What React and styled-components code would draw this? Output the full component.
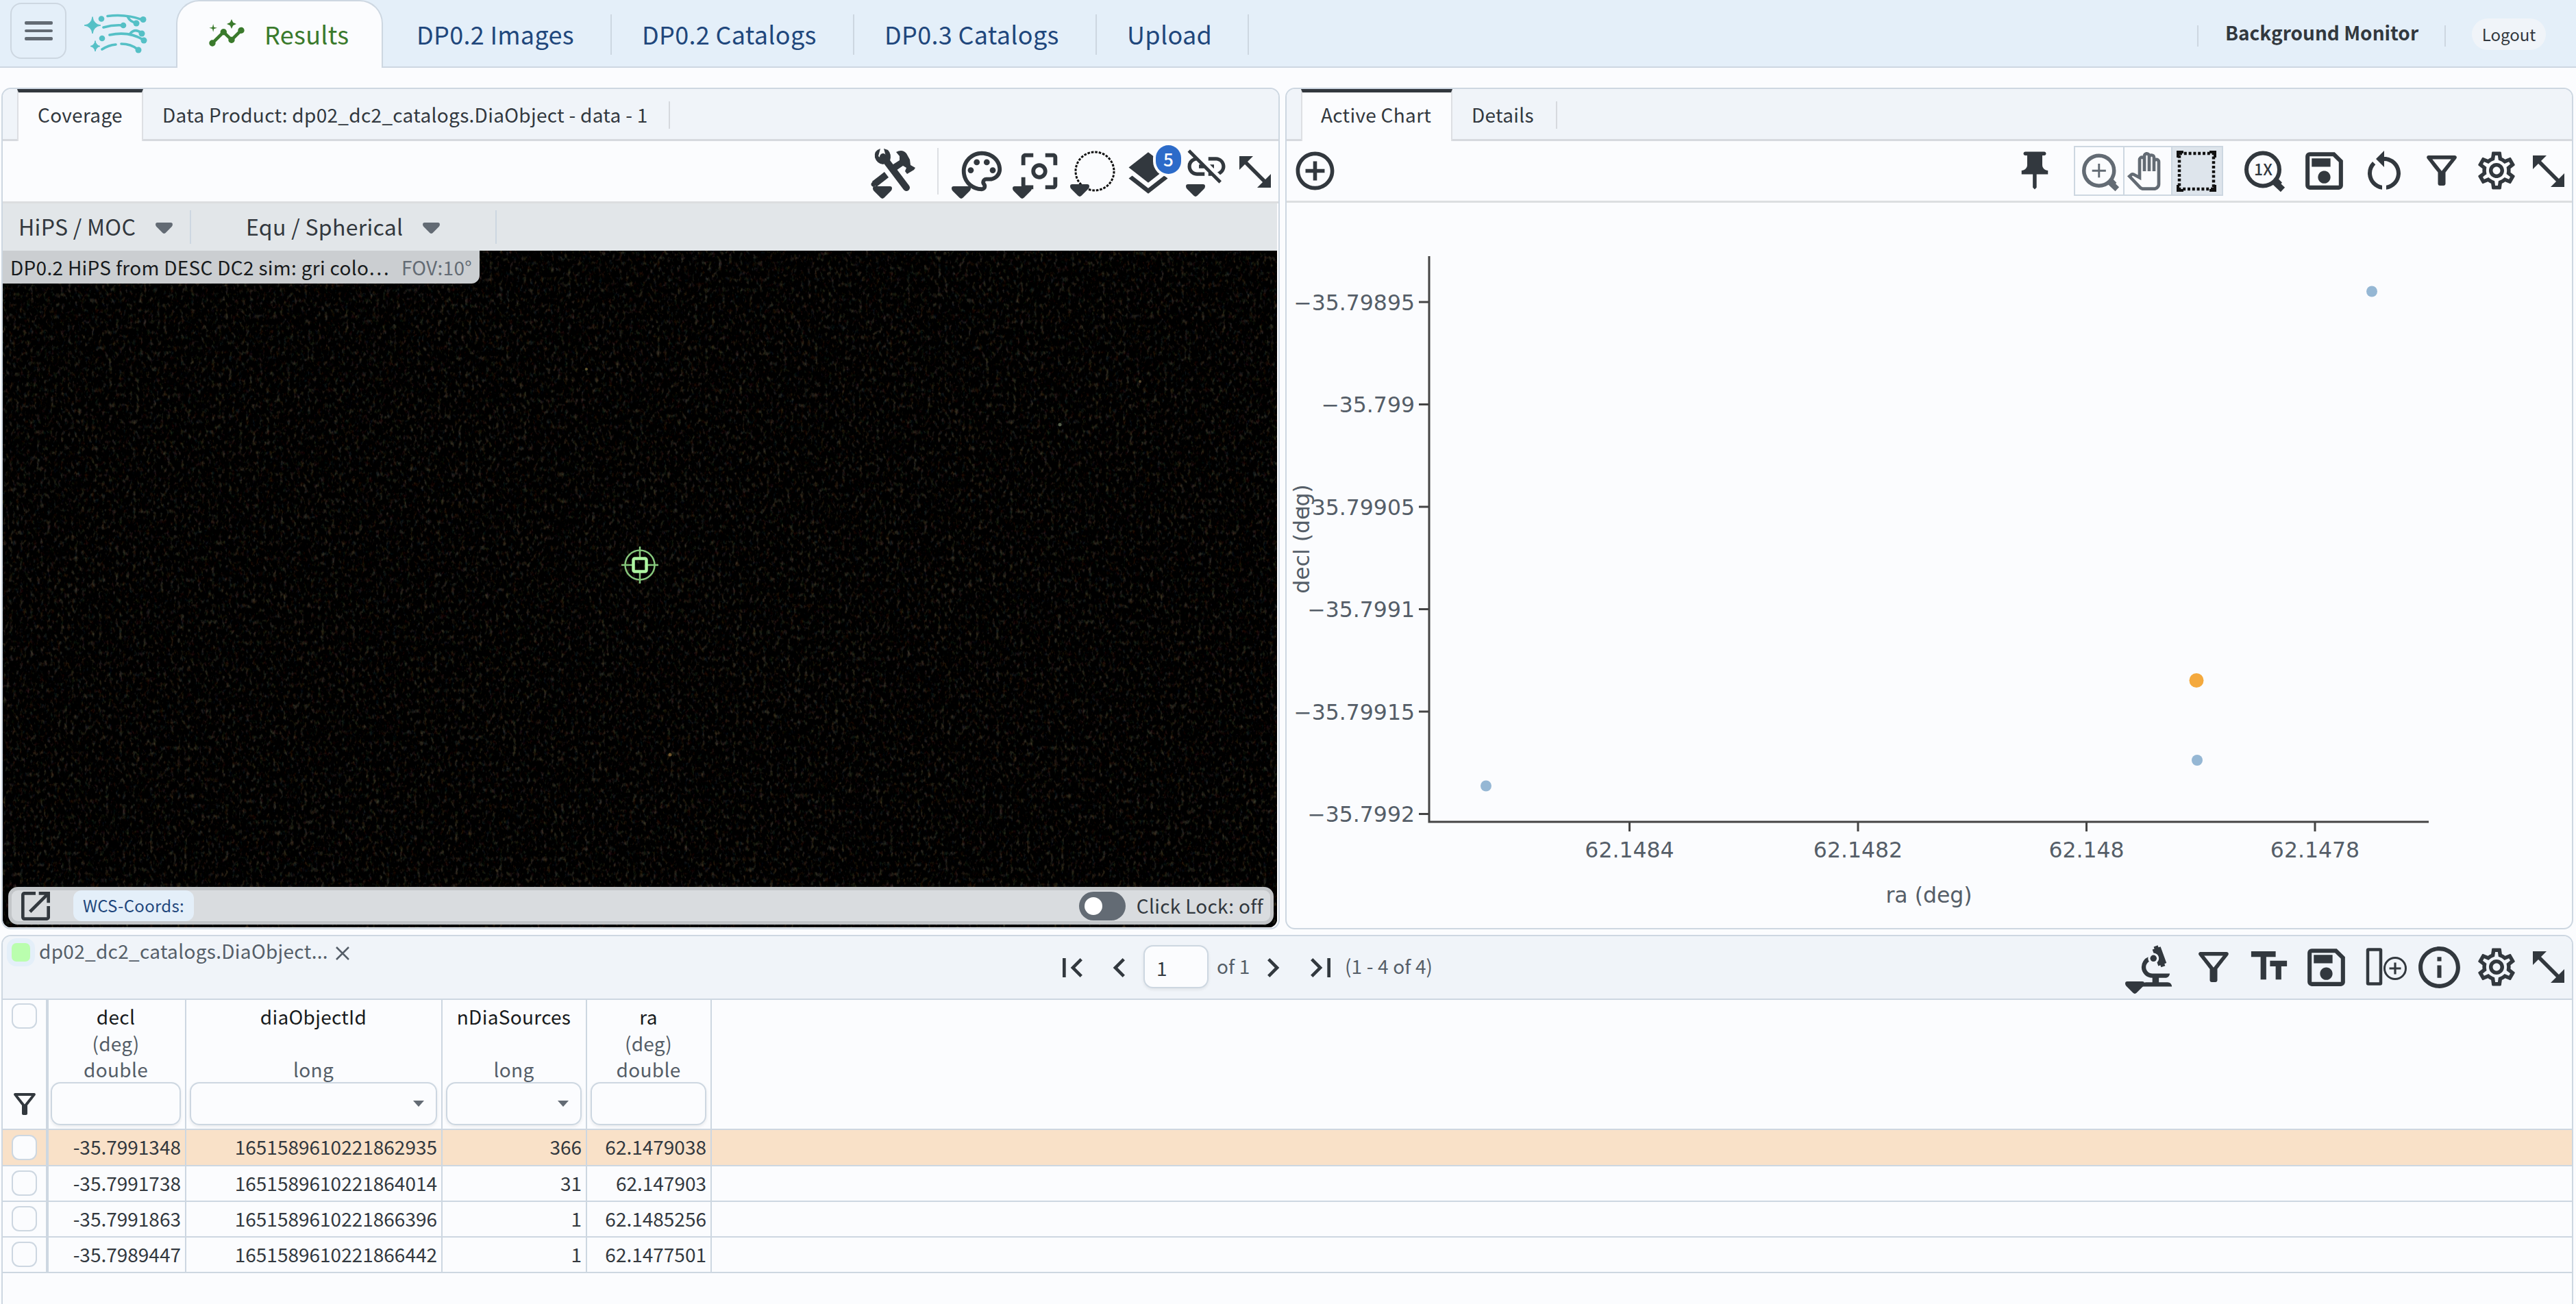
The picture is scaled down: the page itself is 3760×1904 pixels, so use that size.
import React from 'react';
import styled, { createGlobalStyle, css } from 'styled-components';
import {
  MdInsights, MdOutlinePalette, MdCenterFocusWeak, MdLayers, MdLinkOff,
  MdAddCircleOutline, MdPushPin, MdOutlineSave, MdRestartAlt, MdOutlineSettings,
  MdOutlineFilterAlt, MdOutlineTextFields, MdInfoOutline, MdBiotech,
  MdOutlinePanTool, MdOpenInNew, MdFirstPage, MdChevronLeft, MdChevronRight, MdLastPage,
} from 'react-icons/md';

const c = {
  page: '#fbfcfe', header: '#e4eff9', line: '#cdd7e1', panel: '#f0f4f9',
  ink: '#32383e', soft: '#555e68', mute: '#636b74', navy: '#1f477c', green: '#3a7a2c',
};

const Global = createGlobalStyle`
  *, *::before, *::after { box-sizing: border-box; }
  body { margin: 0; background: ${c.page}; overflow: hidden; }
`;

const Page = styled.div`
  display: flex;
  flex-direction: column;
  width: 3760px;
  height: 1904px;
  overflow: hidden;
  background: ${c.page};
  color: ${c.ink};
  font-family: "Noto Sans CJK SC", "Noto Sans", sans-serif;
  font-size: 28px;
  line-height: 40px;
  letter-spacing: 0.3px;
  white-space: nowrap;
`;

/* ---------- header ---------- */
const Header = styled.header`
  display: flex;
  flex: none;
  height: 99px;
  background: ${c.header};
  border-bottom: 2px solid ${c.line};
`;
const MenuButton = styled.button`
  display: flex;
  flex-direction: column;
  justify-content: center;
  align-items: center;
  gap: 7px;
  width: 82px;
  height: 82px;
  margin: 4px 0 0 15px;
  padding: 0;
  background: transparent;
  border: 2px solid ${c.line};
  border-radius: 16px;
`;
const MenuLine = styled.span`
  width: 41px;
  height: 4.5px;
  border-radius: 2px;
  background: ${c.mute};
`;
const Logo = styled.svg`
  width: 94px;
  height: 60px;
  margin: 19px 0 0 25px;
`;
const ActiveTab = styled.div`
  display: flex;
  align-items: center;
  width: 302px;
  height: 99px;
  margin-left: 41px;
  padding: 0 0 4px 44px;
  background: ${c.page};
  border: 2px solid ${c.line};
  border-bottom: 0;
  border-radius: 34px 34px 0 0;
  color: ${c.green};
  font-size: 36px;
  svg { flex: none; }
`;
const TabLabel = styled.span`
  margin-left: 27px;
`;
const NavTab = styled.div`
  display: flex;
  align-items: center;
  justify-content: space-between;
  width: ${(p) => p.$w}px;
  height: 97px;
  padding-left: ${(p) => p.$pad}px;
  color: ${c.navy};
  font-size: 36px;
`;
const Divider = styled.i`
  flex: none;
  width: 2px;
  height: ${(p) => p.$h}px;
  background: ${c.line};
`;
const NavRule = styled(Divider)`
  margin-top: 4px;
`;
const HeaderRight = styled.div`
  display: flex;
  align-items: center;
  margin-left: auto;
  padding-right: 44px;
`;
const Monitor = styled.span`
  width: 359px;
  padding: 0 0 4px 39px;
  font-weight: 700;
  font-size: 28px;
  letter-spacing: 0;
`;
const Rule = styled(Divider)`
  margin-top: 8px;
`;
const Logout = styled.button`
  width: 108px;
  height: 46px;
  margin: 3px 0 0 38px;
  padding: 0;
  border: 0;
  border-radius: 23px;
  background: ${c.panel};
  color: ${c.ink};
  font: 24px/40px "Noto Sans CJK SC", sans-serif;
`;

/* ---------- panels ---------- */
const Panels = styled.div`
  display: flex;
  flex: none;
  gap: 8px;
  height: 1229px;
  margin: 29px 4px 8px 2px;
`;
const Panel = styled.section`
  display: flex;
  flex-direction: column;
  ${(p) => (p.$w ? css`width: ${p.$w}px;` : css`flex: 1;`)}
  border: 2px solid ${c.line};
  border-radius: 14px;
  overflow: hidden;
`;
const TabStrip = styled.div`
  display: flex;
  flex: none;
  height: 76px;
  padding-left: 21px;
  background: ${c.panel};
  box-shadow: inset 0 -3px 0 #d6d9de;
`;
const PanelTab = styled.div`
  width: ${(p) => p.$w}px;
  padding-left: ${(p) => p.$pad}px;
  padding-top: 17px;
  ${(p) => p.$active && css`
    height: 76px;
    padding-top: 12px;
    background: ${c.page};
    border: solid #dddfe3;
    border-width: 0 2px;
    border-top: 5px solid ${c.ink};
  `}
`;
const TabRule = styled(Divider)`
  margin-top: 18px;
  background: #d6d9de;
`;
const Tools = styled.div`
  display: flex;
  flex: none;
  justify-content: flex-end;
  height: ${(p) => p.$h}px;
  padding-right: 11px;
  border-bottom: 3px solid #dcdee0;
`;

/* ---------- toolbar icons ---------- */
const Slot = styled.span`
  position: relative;
  display: flex;
  flex: none;
  align-items: center;
  justify-content: center;
  align-self: flex-start;
  width: ${(p) => p.$w}px;
  height: ${(p) => p.$h}px;
  margin: ${(p) => p.$t}px 0 0 ${(p) => p.$l || 0}px;
  color: ${(p) => p.$color || c.ink};
  ${(p) => p.$end && css`margin-right: auto;`}
  ${(p) => p.$start && css`margin-left: auto;`}
  > svg { flex: none; overflow: visible; }
`;
const ArrowSvg = styled.svg`
  position: absolute;
  left: ${(p) => p.$x}px;
  top: ${(p) => p.$y}px;
  width: 28px;
  height: 18px;
`;
const DropArrow = ({ x, y }) => (
  <ArrowSvg $x={x} $y={y} viewBox="0 0 28 18">
    <path d="M3 0H25Q28 0 28 3Q28 5 26.5 6.8L16.5 16.8Q14 19 11.5 16.8L1.5 6.8Q0 5 0 3Q0 0 3 0Z" fill={c.ink} />
  </ArrowSvg>
);
const Badge = styled.b`
  position: absolute;
  left: 40px;
  top: -12px;
  width: 37px;
  height: 42px;
  border-radius: 19px;
  background: #2c6bc9;
  box-shadow: 0 0 0 4px ${c.page};
  color: #fff;
  font-size: 26px;
  font-weight: 500;
  line-height: 40px;
  text-align: center;
`;
const ToolRule = styled(Divider)`
  margin: 10px 0 0 ${(p) => p.$l}px;
  background: #dddfe3;
`;

const Expand = () => (
  <svg width="46" height="46" viewBox="0 0 46 46" fill="currentColor">
    <path d="M0 0H20L0 20ZM46 46H26L46 26Z" />
    <path d="M7 7L39 39" fill="none" stroke="currentColor" strokeWidth="5.500" />
  </svg>
);
const ToolsIcon = () => (
  <svg width="66" height="64" viewBox="0 0 66 64" fill="none" stroke="currentColor">
    <path d="M18 12L52 57" strokeWidth="10" strokeLinecap="round" />
    <path d="M23 38L5 52" strokeWidth="10" />
    <path d="M8 45L1 50Q-1 54 4 56L12 51Z" fill="currentColor" stroke="none" />
    <path d="M14 0Q4 3 6 13Q9 22 18 23L28 18Q31 8 25 2L19 0L22 11L16 15L11 11Z" fill="currentColor" stroke="none" />
    <path d="M37 5Q46 0 52 7L57 16L58 24L65 28L63 31L53 37L50 33L52 28L47 25L34 34L28 26L42 17L42 11Z" fill="currentColor" stroke="none" />
  </svg>
);
const DottedCircle = () => (
  <svg width="60" height="60" viewBox="0 0 60 60">
    <circle cx="30" cy="30" r="28" fill="none" stroke="#111" strokeWidth="3" strokeDasharray="3.6 1.900" />
  </svg>
);
const DottedRect = () => (
  <svg width="54" height="56" viewBox="0 0 54 56">
    <rect x="2" y="2" width="50" height="52" fill="none" stroke="#111" strokeWidth="4.500" strokeDasharray="4 2.800" />
    <path d="M0 8V0H8M46 0H54V8M54 48V56H46M8 56H0V48" fill="none" stroke="#111" strokeWidth="4" />
  </svg>
);
const LensText = styled.text`
  font: 500 23px "Noto Sans CJK SC", sans-serif;
  letter-spacing: 0;
  fill: ${c.ink};
`;
const Lens = ({ one }) => (
  <svg width={one ? 60 : 55} height={one ? 59 : 54} viewBox="0 0 60 59" fill="none" stroke="currentColor">
    <circle cx="27" cy="27.500" r="24" strokeWidth="6" />
    <path d="M46 44L49 47L47.500 49L56 57" strokeWidth="9" />
    {one
      ? <LensText x="27.500" y="36" textAnchor="middle" stroke="none">1X</LensText>
      : <path d="M16 27.500H38M27 16.500V38.500" strokeWidth="3.200" />}
  </svg>
);
const AddColumn = () => (
  <svg width="60" height="56" viewBox="0 0 60 56" fill="none" stroke="currentColor">
    <rect x="2" y="2.500" width="19" height="50" rx="1" strokeWidth="4.500" />
    <circle cx="42" cy="30" r="15.500" strokeWidth="3" />
    <path d="M33.500 30H50.500M42 21.500V38.500" strokeWidth="3.200" />
  </svg>
);

/* ---------- image viewer ---------- */
const Viewer = styled.div`
  position: relative;
  display: flex;
  flex-direction: column;
  flex: 1;
  margin: 0 2px 1px 0;
  background: #020201;
  border-radius: 0 0 12px 12px;
  overflow: hidden;
`;
const Sky = styled.svg`
  position: absolute;
  inset: 0;
  width: 100%;
  height: 100%;
`;
const ViewBar = styled.div`
  position: relative;
  display: flex;
  align-items: center;
  height: 69px;
  background: #e2e6e9;
  font-size: 32px;
`;
const ViewMenu = styled.div`
  display: flex;
  align-items: center;
  width: ${(p) => p.$w}px;
  padding-left: ${(p) => p.$pad}px;
  padding-bottom: 3px;
  svg { flex: none; margin: 6px 25px 0 auto; }
`;
const Caret = () => (
  <svg width="25" height="16" viewBox="0 0 28 18">
    <path d="M3 0H25Q28 0 28 3Q28 5 26.500 6.800L16.500 16.800Q14 19 11.500 16.800L1.500 6.800Q0 5 0 3Q0 0 3 0Z" fill={c.mute} />
  </svg>
);
const ImageTitle = styled.div`
  position: relative;
  display: flex;
  width: 696px;
  height: 48px;
  padding: 4px 0 0 11px;
  border-radius: 0 0 12px 0;
  background: #cbced1;
  color: #171a1c;
`;
const Fov = styled.span`
  margin-left: 18px;
  color: ${c.mute};
`;
const Readout = styled.div`
  position: relative;
  display: flex;
  align-items: center;
  height: 55px;
  margin: auto 5px 4px 8px;
  padding: 0 10px 0 14px;
  border: 5px solid #c3c6c9;
  border-radius: 14px;
  background: #d9dcdf;
`;
const Chip = styled.span`
  width: 176px;
  height: 45px;
  margin-left: 34px;
  border-radius: 12px;
  background: ${c.header};
  color: ${c.navy};
  font-size: 24px;
  line-height: 43px;
  text-align: center;
`;
const Toggle = styled.span`
  width: 68px;
  height: 42px;
  margin: 0 16px 0 auto;
  padding: 8px;
  border-radius: 21px;
  background: ${c.mute};
`;
const Knob = styled.i`
  display: block;
  width: 26px;
  height: 26px;
  border-radius: 50%;
  background: #fff;
`;
const ClickLock = styled.span`
  font-size: 28px;
  padding-bottom: 2px;
`;

/* ---------- chart ---------- */
const ButtonGroup = styled.div`
  display: flex;
  flex: none;
  align-self: flex-start;
  width: 218px;
  height: 73px;
  margin: 7px 0 0 38px;
  border: 2px solid ${c.line};
`;
const GroupCell = styled.div`
  display: flex;
  width: ${(p) => p.$w}px;
  border-left: ${(p) => (p.$first ? 0 : 2)}px solid ${c.line};
  background: ${(p) => (p.$on ? '#dee5ec' : 'transparent')};
`;
const Chart = styled.svg`
  flex: none;
  width: 1876px;
  height: 1059px;
  font: 31.500px "DejaVu Sans", Verdana, sans-serif;
  letter-spacing: 0;
`;
const yTicks = [['−35.79895', 441], ['−35.799', 590.5], ['−35.79905', 740], ['−35.7991', 889.5], ['−35.79915', 1039], ['−35.7992', 1188.5]];
const xTicks = [['62.1484', 2378.5], ['62.1482', 2712], ['62.148', 3045.5], ['62.1478', 3379]];
const points = [[2169, 1147.5], [3207, 1110], [3462, 425.5]];

const Plot = () => (
  <Chart viewBox="1878 296 1876 1059">
    <g fill={c.soft}>
      {yTicks.map(([t, y]) => <text key={t} x="2065" y={y + 11.5} textAnchor="end">{t}</text>)}
      {xTicks.map(([t, x]) => <text key={t} x={x} y="1251.500" textAnchor="middle">{t}</text>)}
      <text x="2815.500" y="1318" textAnchor="middle">ra (deg)</text>
      <text transform="translate(1911 787) rotate(-90)" textAnchor="middle">decl (deg)</text>
    </g>
    <g stroke="#444" fill="none" strokeWidth="3">
      <path d="M2086 374V1201M2084.500 1200H3545" />
      {yTicks.map(([t, y]) => <path key={t} d={`M2071 ${y}H2085`} />)}
      {xTicks.map(([t, x]) => <path key={t} d={`M${x} 1200V1214`} />)}
    </g>
    {points.map(([x, y]) => <circle key={x} cx={x} cy={y} r="8" fill="#95b7d4" />)}
    <circle cx="3206" cy="993.500" r="10.500" fill="#f4a93d" />
  </Chart>
);

/* ---------- table ---------- */
const TablePanel = styled.section`
  flex: none;
  height: 560px;
  margin: 0 4px 0 2px;
  border: 2px solid ${c.line};
  border-radius: 14px;
  overflow: hidden;
`;
const TableBar = styled.div`
  display: flex;
  height: 93px;
  padding-right: 11px;
  background: ${c.panel};
  border-bottom: 2px solid ${c.line};
  color: ${c.soft};
`;
const Swatch = styled.span`
  flex: none;
  width: 41px;
  height: 41px;
  margin: 3px 6px 0 6px;
  border: 7px solid ${c.header};
  border-radius: 14px;
  background: #bafeae;
`;
const TableName = styled.span`
  flex: none;
  width: 433px;
  padding-top: 1px;
`;
const PageInput = styled.span`
  flex: none;
  width: 95px;
  height: 63px;
  margin: 13px 0 0 27px;
  padding: 11px 0 0 17px;
  border: 2px solid ${c.line};
  border-radius: 14px;
  background: ${c.page};
  box-shadow: 0 2px 4px rgba(21, 21, 21, .08);
  color: ${c.ink};
`;
const BarText = styled.span`
  flex: none;
  margin: 23px 0 0 ${(p) => p.$l}px;
  width: ${(p) => p.$w}px;
  letter-spacing: 0.15px;
`;
const Row = styled.div`
  display: flex;
  height: ${(p) => p.$h}px;
  border-bottom: 2px solid ${c.line};
  ${(p) => p.$on && css`background: #f9e1c8;`}
`;
const CheckCell = styled.div`
  flex: none;
  width: 67px;
  padding: ${(p) => p.$t}px 0 0 13px;
  border-right: 4px solid ${c.line};
`;
const Check = styled.span`
  display: block;
  width: 37px;
  height: 37px;
  border: 2px solid ${c.line};
  border-radius: 11px;
  background: ${c.page};
`;
const FilterMark = styled.div`
  display: flex;
  justify-content: center;
  width: 37px;
  margin-top: 86px;
  svg { flex: none; }
`;
const Cell = styled.div`
  flex: none;
  width: ${(p) => p.$w}px;
  padding: 4px 6px 0 0;
  border-right: 2px solid ${c.line};
  letter-spacing: 0;
  text-align: right;
`;
const HeadCell = styled.div`
  display: flex;
  flex-direction: column;
  flex: none;
  width: ${(p) => p.$w}px;
  padding: 5px 6px 0 ${(p) => p.$pl}px;
  border-right: 2px solid ${c.line};
  color: ${c.soft};
  line-height: 38.500px;
  text-align: center;
`;
const ColName = styled.span`
  height: 38.500px;
  color: #171a1c;
`;
const ColMeta = styled.span`
  height: 38.500px;
`;
const FilterInput = styled.div`
  display: flex;
  align-items: center;
  justify-content: flex-end;
  height: 63px;
  margin-top: -1px;
  padding-right: 17px;
  border: 2px solid ${c.line};
  border-radius: 14px;
  box-shadow: 0 2px 4px rgba(21, 21, 21, .08);
`;
const columns = [
  { name: 'decl', unit: '(deg)', type: 'double', w: 201, pl: 3 },
  { name: 'diaObjectId', unit: '', type: 'long', w: 374, pl: 5, menu: true },
  { name: 'nDiaSources', unit: '', type: 'long', w: 211, pl: 5, menu: true },
  { name: 'ra', unit: '(deg)', type: 'double', w: 182, pl: 5 },
];
const rows = [
  ['-35.7991348', '1651589610221862935', '366', '62.1479038'],
  ['-35.7991738', '1651589610221864014', '31', '62.147903'],
  ['-35.7991863', '1651589610221866396', '1', '62.1485256'],
  ['-35.7989447', '1651589610221866442', '1', '62.1477501'],
];

const SkyImage = () => (
  <Sky>
    <defs>
      <filter id="stars" x="0" y="0" width="100%" height="100%" colorInterpolationFilters="sRGB">
        <feTurbulence type="fractalNoise" baseFrequency="0.2 0.13" numOctaves="3" seed="7" />
        <feColorMatrix values="0.5 0.25 0 0 -0.385  0.36 0.34 0 0 -0.362  0.26 0.28 0.1 0 -0.332  0 0 0 0 1" />
      </filter>
    </defs>
    <rect width="100%" height="100%" filter="url(#stars)" />
    <g fill="#6d7a5e" opacity="0.8">
      <circle cx="1543" cy="323" r="2.500" />
      <circle cx="852" cy="242" r="2" fill="#7a6a3a" />
      <circle cx="974" cy="805" r="2.500" fill="#8a6a38" />
      <circle cx="1660" cy="260" r="2" fill="#6d5a3a" />
    </g>
    <g transform="translate(930 528)" fill="none" stroke="#86c67c" strokeWidth="2.500">
      <circle r="21.500" />
      <path d="M-27 0H-10M10 0H27M0 -27V-10M0 10V27" />
      <rect x="-9.500" y="-9.500" width="19" height="19" rx="2" stroke="#aef5a2" strokeWidth="4.500" />
    </g>
  </Sky>
);

const RubinLogo = () => (
  <Logo viewBox="0 0 94 60" fill="none" stroke="#55c0c6" strokeWidth="3.600" strokeLinecap="round">
    <path d="M35 4.500Q62 1 86 10M64 5Q68 13 76 14M29 21Q43 17 57 18M38 32Q66 26 87 39M68 30Q75 22 84 29M27 53Q36 47 47 46M55 45Q69 45 79 53" />
    <g fill="#55c0c6" stroke="none">
      <circle cx="87" cy="9.500" r="4.500" /><circle cx="77" cy="15" r="4.500" /><circle cx="58" cy="18" r="4.300" />
      <circle cx="85" cy="30" r="4.500" /><circle cx="88" cy="40" r="4.500" /><circle cx="80" cy="54" r="4.500" />
      <circle cx="26" cy="8.500" r="4.300" /><circle cx="27" cy="37" r="4.300" />
      <path d="M13 6Q14.500 16.500 25 18Q14.500 19.500 13 30Q11.500 19.500 1 18Q11.500 16.500 13 6Z" strokeWidth="1" stroke="#55c0c6" />
      <path d="M17 41Q18.200 47.300 24 48.500Q18.200 49.700 17 56Q15.800 49.700 10 48.500Q15.800 47.300 17 41Z" strokeWidth="1" stroke="#55c0c6" />
    </g>
  </Logo>
);

export default function App() {
  return (
    <Page>
      <Global />
      <Header>
        <MenuButton><MenuLine /><MenuLine /><MenuLine /></MenuButton>
        <RubinLogo />
        <ActiveTab><MdInsights size={56} /><TabLabel>Results</TabLabel></ActiveTab>
        <NavTab $w={334} $pad={49}>DP0.2 Images<NavRule $h={59} /></NavTab>
        <NavTab $w={354} $pad={44}>DP0.2 Catalogs<NavRule $h={59} /></NavTab>
        <NavTab $w={354} $pad={44}>DP0.3 Catalogs<NavRule $h={59} /></NavTab>
        <NavTab $w={222} $pad={44}>Upload<NavRule $h={59} /></NavTab>
        <HeaderRight>
          <Rule $h={31} />
          <Monitor>Background Monitor</Monitor>
          <Rule $h={31} />
          <Logout>Logout</Logout>
        </HeaderRight>
      </Header>

      <Panels>
        <Panel $w={1866}>
          <TabStrip>
            <PanelTab $active $w={184} $pad={28}>Coverage</PanelTab>
            <PanelTab $w={767} $pad={28}>Data Product: dp02_dc2_catalogs.DiaObject - data - 1</PanelTab>
            <TabRule $h={40} />
          </TabStrip>
          <Tools $h={91}>
            <Slot $w={64} $h={62} $t={12}><ToolsIcon /><DropArrow x={2} y={54} /></Slot>
            <ToolRule $h={68} $l={32} />
            <Slot $w={58} $h={57} $t={15} $l={34}><MdOutlinePalette size={70} /><DropArrow x={-15} y={51} /></Slot>
            <Slot $w={53} $h={52} $t={18} $l={28}><MdCenterFocusWeak size={70} /><DropArrow x={-12} y={48} /></Slot>
            <Slot $w={59} $h={59} $t={14} $l={25}><DottedCircle /><DropArrow x={-6} y={49} /></Slot>
            <Slot $w={57} $h={59} $t={18} $l={20}><MdLayers size={76} /><Badge>5</Badge></Slot>
            <Slot $w={55} $h={48} $t={13} $l={29}><MdLinkOff size={66} /><DropArrow x={-2} y={50} /></Slot>
            <Slot $w={46} $h={46} $t={22} $l={21}><Expand /></Slot>
          </Tools>
          <Viewer>
            <SkyImage />
            <ViewBar>
              <ViewMenu $w={273} $pad={23}>HiPS / MOC<Caret /></ViewMenu>
              <Divider $h={49} />
              <ViewMenu $w={388} $pad={80}>Equ / Spherical<Caret /></ViewMenu>
              <ViewMenu $w={56} $pad={0} />
              <Divider $h={49} />
            </ViewBar>
            <ImageTitle>DP0.2 HiPS from DESC DC2 sim: gri colo…<Fov>FOV:10°</Fov></ImageTitle>
            <Readout>
              <Slot $w={42} $h={42} $t={2}><MdOpenInNew size={56} /></Slot>
              <Chip>WCS-Coords:</Chip>
              <Toggle><Knob /></Toggle>
              <ClickLock>Click Lock: off</ClickLock>
            </Readout>
          </Viewer>
        </Panel>

        <Panel>
          <TabStrip>
            <PanelTab $active $w={221} $pad={27}>Active Chart</PanelTab>
            <PanelTab $w={151} $pad={28}>Details</PanelTab>
            <TabRule $h={40} />
          </TabStrip>
          <Tools $h={90}>
            <Slot $w={56} $h={56} $t={15} $l={13} $end><MdAddCircleOutline size={67} /></Slot>
            <Slot $w={39} $h={56} $t={15}><MdPushPin size={66} /></Slot>
            <ButtonGroup>
              <GroupCell $w={70} $first><Slot $w={55} $h={54} $t={9} $l={10} $color={c.mute}><Lens /></Slot></GroupCell>
              <GroupCell $w={70}><Slot $w={47} $h={55} $t={7} $l={5} $color={c.mute}><MdOutlinePanTool size={56} /></Slot></GroupCell>
              <GroupCell $w={74} $on><Slot $w={54} $h={57} $t={6} $l={8}><DottedRect /></Slot></GroupCell>
            </ButtonGroup>
            <Slot $w={60} $h={59} $t={14} $l={31}><Lens one /></Slot>
            <Slot $w={55} $h={55} $t={16} $l={29}><MdOutlineSave size={73} /></Slot>
            <Slot $w={49} $h={57} $t={15} $l={35}><MdRestartAlt size={72} /></Slot>
            <Slot $w={44} $h={44} $t={21} $l={38}><MdOutlineFilterAlt size={66} /></Slot>
            <Slot $w={54} $h={56} $t={15} $l={31}><MdOutlineSettings size={66} /></Slot>
            <Slot $w={46} $h={46} $t={21} $l={26}><Expand /></Slot>
          </Tools>
          <Plot />
        </Panel>
      </Panels>

      <TablePanel>
        <TableBar>
          <Swatch />
          <TableName>dp02_dc2_catalogs.DiaObject...</TableName>
          <Slot $w={20} $h={20} $t={15}>
            <svg width="20" height="20" viewBox="0 0 20 20"><path d="M1 1L19 19M19 1L1 19" stroke={c.soft} strokeWidth="2.500" /></svg>
          </Slot>
          <Slot $w={30} $h={28} $t={32} $l={1040}><MdFirstPage size={56} /></Slot>
          <Slot $w={17} $h={28} $t={32} $l={45}><MdChevronLeft size={56} /></Slot>
          <PageInput>1</PageInput>
          <BarText $l={12} $w={50}>of 1</BarText>
          <Slot $w={17} $h={28} $t={32} $l={23}><MdChevronRight size={56} /></Slot>
          <Slot $w={30} $h={28} $t={32} $l={47}><MdLastPage size={56} /></Slot>
          <BarText $l={20} $w={150}>(1 - 4 of 4)</BarText>
          <Slot $w={42} $h={60} $t={15} $start><MdBiotech size={76} /><DropArrow x={-25} y={51} /></Slot>
          <Slot $w={44} $h={44} $t={23} $l={40}><MdOutlineFilterAlt size={66} /></Slot>
          <Slot $w={52} $h={42} $t={23} $l={33}><MdOutlineTextFields size={66} /></Slot>
          <Slot $w={55} $h={55} $t={18} $l={30}><MdOutlineSave size={73} /></Slot>
          <Slot $w={60} $h={56} $t={17} $l={31}><AddColumn /></Slot>
          <Slot $w={61} $h={61} $t={15} $l={16}><MdInfoOutline size={73} /></Slot>
          <Slot $w={54} $h={56} $t={17} $l={26}><MdOutlineSettings size={66} /></Slot>
          <Slot $w={46} $h={46} $t={22} $l={26}><Expand /></Slot>
        </TableBar>
        <Row $h={190}>
          <CheckCell $t={5}>
            <Check />
            <FilterMark><MdOutlineFilterAlt size={48} /></FilterMark>
          </CheckCell>
          {columns.map((col) => (
            <HeadCell key={col.name} $w={col.w} $pl={col.pl}>
              <ColName>{col.name}</ColName>
              <ColMeta>{col.unit}</ColMeta>
              <ColMeta>{col.type}</ColMeta>
              <FilterInput>
                {col.menu && <svg width="16" height="9" viewBox="0 0 16 9"><path d="M0 0H16L8 9Z" fill={c.mute} /></svg>}
              </FilterInput>
            </HeadCell>
          ))}
        </Row>
        {rows.map((row, i) => (
          <Row key={row[1]} $h={i ? 52 : 53} $on={i === 0}>
            <CheckCell $t={i ? 6 : 7}><Check /></CheckCell>
            {row.map((v, j) => <Cell key={columns[j].name} $w={columns[j].w}>{v}</Cell>)}
          </Row>
        ))}
      </TablePanel>
    </Page>
  );
}
